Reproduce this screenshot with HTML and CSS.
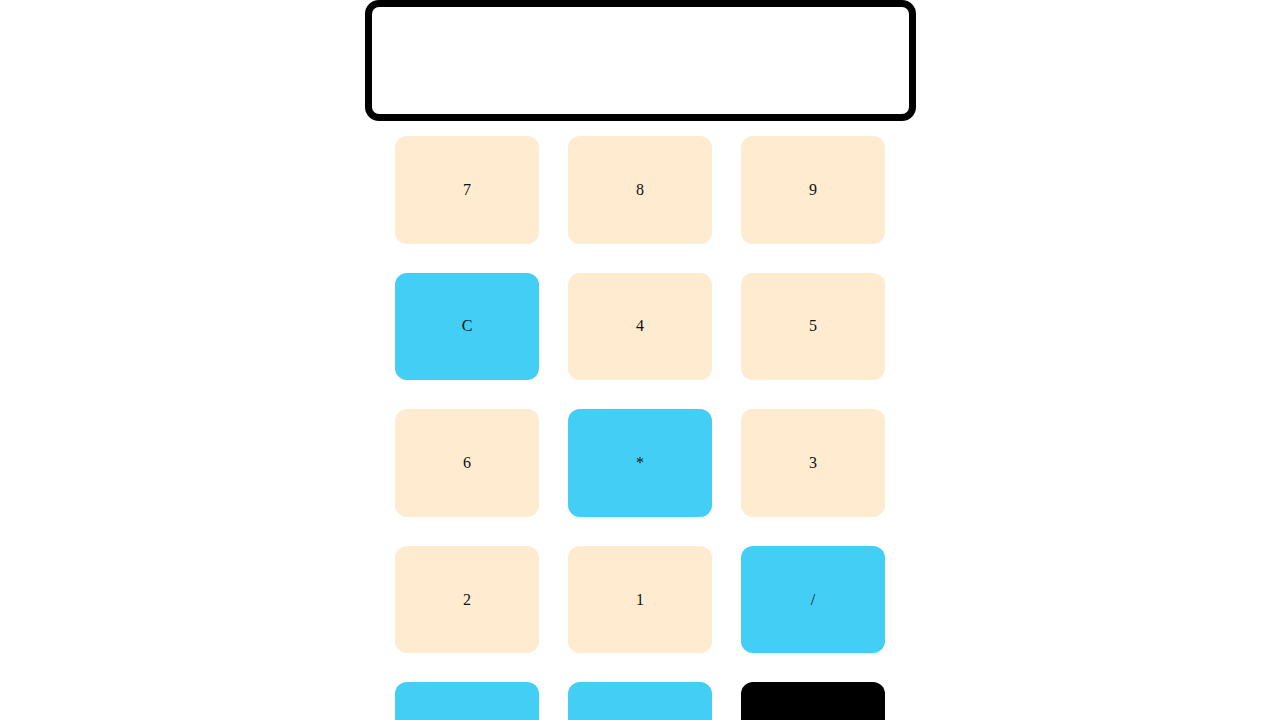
FILE: index.html
```html
<!DOCTYPE html>
<html>
<head>
<meta charset="utf-8">
<link rel="stylesheet" href="styles.css">
</head>
<body>
<div class="calc">
  <div class="display"></div>
  <div class="keys">
    <button class="key num">7</button>
    <button class="key num">8</button>
    <button class="key num">9</button>
    <button class="key op">C</button>
    <button class="key num">4</button>
    <button class="key num">5</button>
    <button class="key num">6</button>
    <button class="key op">*</button>
    <button class="key num">3</button>
    <button class="key num">2</button>
    <button class="key num">1</button>
    <button class="key op">/</button>
    <button class="key op">+</button>
    <button class="key op">-</button>
    <button class="key eq">=</button>
  </div>
</div>
</body>
</html>
```
FILE: styles.css
```css
html, body {
  margin: 0;
  padding: 0;
  background: #ffffff;
}
body {
  font-family: "Liberation Serif", "Times New Roman", serif;
  font-size: 16px;
}
.calc {
  display: flex;
  flex-direction: column;
  align-items: center;
}
.display {
  box-sizing: border-box;
  width: 551px;
  height: 121px;
  border: 7px solid #000000;
  border-radius: 14px;
  background: #ffffff;
}
.keys {
  margin-top: 15px;
  display: grid;
  grid-template-columns: repeat(3, 144px);
  grid-auto-rows: 107.6px;
  column-gap: 29px;
  row-gap: 29px;
}
.key {
  border: none;
  border-radius: 12px;
  font-family: "Liberation Serif", "Times New Roman", serif;
  font-size: 16px;
  color: #111111;
  padding: 0;
}
.num {
  background: #feebd0;
}
.op {
  background: #43cef5;
}
.eq {
  background: #000000;
  color: #ffffff;
}
```
